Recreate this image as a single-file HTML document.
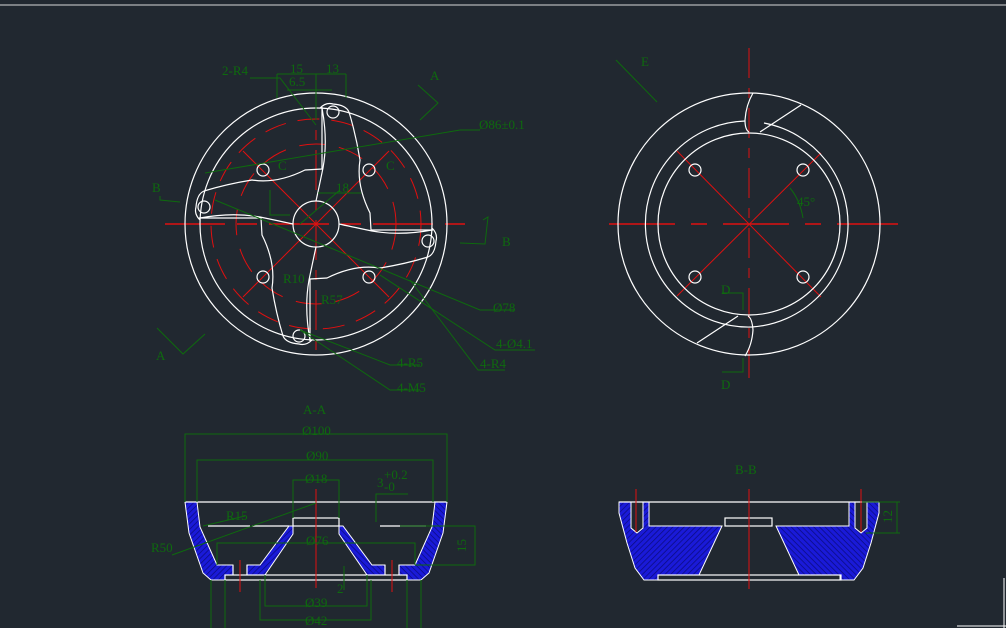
<!DOCTYPE html>
<html><head><meta charset="utf-8"><style>
html,body{margin:0;padding:0;background:#212830;}
svg{display:block}
text{font-family:"Liberation Serif",serif;fill:#0e6a0e;font-size:13px}
</style></head><body>
<svg width="1006" height="628" viewBox="0 0 1006 628" xmlns="http://www.w3.org/2000/svg">
<defs>
<pattern id="h" width="4" height="4" patternUnits="userSpaceOnUse" patternTransform="rotate(45)">
<rect width="4" height="4" fill="#1a1ad8"/><line x1="0" y1="0" x2="0" y2="4" stroke="#0b0b80" stroke-width="1.5"/>
</pattern>
</defs>
<line x1="0" y1="5" x2="1006" y2="5" stroke="#d8d8d8" stroke-width="1"/>

<!-- LEFT VIEW -->
<g fill="none">
<g stroke="#e01010" stroke-width="1">
<line x1="165" y1="224" x2="465" y2="224" stroke-width="1.5" stroke-dasharray="60,12,20,12"/>
<line x1="316" y1="80" x2="316" y2="355" stroke-dasharray="40,10,10,10"/>
<circle cx="316" cy="224" r="105" stroke-dasharray="22,12"/>
<circle cx="316" cy="224" r="80" stroke-dasharray="26,14"/>
<line x1="243" y1="151" x2="389" y2="297"/>
<line x1="389" y1="151" x2="243" y2="297"/>
</g>
<g stroke="#fff" stroke-width="1.2">
<circle cx="316" cy="224" r="131"/>
<circle cx="316" cy="224" r="116"/>
<circle cx="316" cy="224" r="23"/>
<circle cx="263" cy="170" r="6"/><circle cx="369" cy="170" r="6"/>
<circle cx="263" cy="277" r="6"/><circle cx="369" cy="277" r="6"/>
<g id="arm">
<path d="M322,108 Q328,140 323,168 Q318,192 316,201"/>
<path d="M349,112 Q356,135 360,160 Q356,185 370,213 L371,230 L433,230"/>
<path d="M320,108 Q326,102 333,104 Q346,105 349,112"/>
<circle cx="333" cy="112" r="6"/>
</g>
<use href="#arm" transform="rotate(90 316 224)"/>
<use href="#arm" transform="rotate(180 316 224)"/>
<use href="#arm" transform="rotate(270 316 224)"/>
</g>
<g stroke="#0e6a0e" stroke-width="1">
<path d="M277,98 L277,74 M346,98 L346,74 M277,74 L346,74 M316,74 L316,120 M287,90 L332,90"/>
<path d="M250,78 L280,78 L316,125"/>
<path d="M420,120 L438,103 L418,85"/>
<path d="M205,173 L460,130 L480,130"/>
<path d="M160,196 L160,200 L180,202"/>
<path d="M483,220 L488,217 L485,244 L460,243"/>
<path d="M300,224 L340,190 M318,193 L361,193"/>
<path d="M215,200 L480,310 L515,310"/>
<path d="M380,275 L495,350 L535,350"/>
<path d="M410,280 L478,370 L505,370"/>
<path d="M300,330 L390,365 L420,365"/>
<path d="M300,330 L390,390 L420,390"/>
<path d="M157,328 L183,354 L205,334"/>
<path d="M270,190 L270,215 L290,215"/>
</g>
</g>
<text x="222" y="75">2-R4</text>
<text x="290" y="73">15</text><text x="326" y="73">13</text>
<text x="289" y="86">6.5</text>
<text x="430" y="80" font-size="15">A</text>
<text x="479" y="129">Ø86±0.1</text>
<text x="152" y="192" font-size="14">B</text>
<text x="278" y="170" font-size="14">C</text>
<text x="386" y="170" font-size="14">C</text>
<text x="336" y="192">18</text>
<text x="283" y="283">R10</text>
<text x="321" y="304">R57</text>
<text x="502" y="246" font-size="14">B</text>
<text x="493" y="312">Ø78</text>
<text x="496" y="348">4-Ø4.1</text>
<text x="480" y="368">4-R4</text>
<text x="397" y="367">4-R5</text>
<text x="397" y="392">4-M5</text>
<text x="156" y="360" font-size="15">A</text>

<!-- RIGHT VIEW -->
<g fill="none">
<g stroke="#e01010" stroke-width="1">
<line x1="609" y1="224" x2="898" y2="224" stroke-width="1.5" stroke-dasharray="66,16,16,16"/>
<line x1="749" y1="48" x2="749" y2="388" stroke-dasharray="30,10,10,10"/>
<line x1="677" y1="151" x2="821" y2="297"/>
<line x1="821" y1="153" x2="677" y2="296"/>
</g>
<g stroke="#fff" stroke-width="1.2">
<circle cx="749" cy="224" r="131"/>
<path d="M745,121 A103,103 0 1 0 752,327"/>
<path d="M764,123 A103,103 0 0 1 752,327"/>
<circle cx="749" cy="224" r="91"/>
<circle cx="695" cy="170" r="6"/><circle cx="803" cy="170" r="6"/>
<circle cx="695" cy="277" r="6"/><circle cx="803" cy="277" r="6"/>
<path d="M753,93 Q746,105 745,120 Q745,130 749,132 M760,132 L801,105"/>
<path d="M745,356 Q752,345 753,330 Q752,318 748,316 M738,316 L697,343"/>
</g>
<g stroke="#0e6a0e" stroke-width="1">
<path d="M616,60 L657,102"/>
<path d="M790,188 Q800,200 803,218"/>
<path d="M722,293 L743,293 L743,310"/>
<path d="M722,372 L743,372 L743,358"/>
</g>
</g>
<text x="641" y="66" font-size="15">E</text>
<text x="797" y="206">45°</text>
<text x="721" y="294" font-size="15">D</text>
<text x="721" y="389" font-size="15">D</text>

<!-- SECTION A-A -->
<g>
<g id="aal">
<path d="M185,502 L197,502 L200,527 L217,565 L233,565 L233,575 L225,575 L225,580 L211,580 L203,573 L189,533 Z" fill="url(#h)" stroke="#fff" stroke-width="1"/>
<path d="M247,565 L260,565 L289,526 L293,526 L293,534 L265,575 L247,575 Z" fill="url(#h)" stroke="#fff" stroke-width="1"/>
</g>
<use href="#aal" transform="translate(632 0) scale(-1 1)"/>
<g fill="none" stroke="#fff" stroke-width="1.2">
<line x1="185" y1="502" x2="447" y2="502"/>
<rect x="293" y="518" width="46" height="8"/>
<line x1="208" y1="526" x2="250" y2="526"/><line x1="252" y1="526" x2="289" y2="526"/>
<line x1="380" y1="526" x2="426" y2="526"/>
<rect x="225" y="575" width="182" height="5"/>
<line x1="233" y1="565" x2="233" y2="575"/><line x1="247" y1="565" x2="247" y2="575"/>
<line x1="385" y1="565" x2="385" y2="575"/><line x1="399" y1="565" x2="399" y2="575"/>
</g>
<g stroke="#e01010" stroke-width="1"><line x1="316" y1="489" x2="316" y2="588"/><line x1="240" y1="560" x2="240" y2="592"/><line x1="392" y1="560" x2="392" y2="592"/></g>
<g fill="none" stroke="#0e6a0e" stroke-width="1">
<path d="M185,502 L185,434 L447,434 L447,502"/>
<path d="M197,502 L197,460 L433,460 L433,502"/>
<path d="M293,518 L293,480 L339,480 L339,518"/>
<path d="M376,522 L376,494 L408,494"/>
<path d="M217,565 L217,543 L415,543 L415,565"/>
<path d="M400,526 L475,526 L475,565 L415,565"/>
<path d="M172,555 L316,503"/>
<path d="M203,526 L245,516"/>
<path d="M265,575 L265,606 L367,606 L367,575"/>
<path d="M260,580 L260,620 L371,620 L371,580"/>
<path d="M211,580 L211,628 M225,580 L225,628 M407,580 L407,628 M421,580 L421,628"/>
<path d="M344,566 L344,590"/>
</g>
</g>
<text x="303" y="414" font-size="14">A-A</text>
<text x="302" y="435">Ø100</text>
<text x="306" y="460">Ø90</text>
<text x="305" y="483">Ø18</text>
<text x="377" y="487">3</text><text x="384" y="479" font-size="11">+0.2</text><text x="384" y="491" font-size="11">-0</text>
<text x="226" y="520">R15</text>
<text x="151" y="552">R50</text>
<text x="306" y="545">Ø76</text>
<text x="466" y="552" transform="rotate(-90 466 552)">15</text>
<text x="337" y="593">2</text>
<text x="305" y="607">Ø39</text>
<text x="305" y="625">Ø42</text>

<!-- SECTION B-B -->
<g>
<g id="bbl">
<path d="M619,502 L631,502 L631,528 L637,533 L643,528 L643,502 L649,502 L649,526 L722,526 L699,575 L658,575 L658,580 L644,580 L635,568 L627,543 L619,513 Z" fill="url(#h)" stroke="#fff" stroke-width="1"/>
</g>
<use href="#bbl" transform="translate(1498 0) scale(-1 1)"/>
<g fill="none" stroke="#fff" stroke-width="1.2">
<line x1="619" y1="502" x2="879" y2="502"/>
<rect x="725" y="518" width="47" height="8"/>
<rect x="658" y="575" width="183" height="5"/>
</g>
<g stroke="#e01010" stroke-width="1"><line x1="749" y1="489" x2="749" y2="589"/><line x1="636" y1="489" x2="636" y2="532"/><line x1="861" y1="489" x2="861" y2="532"/></g>
<g fill="none" stroke="#0e6a0e" stroke-width="1"><path d="M862,502 L900,502 M866,533 L900,533 M897,502 L897,533"/></g>
</g>
<text x="735" y="474" font-size="14">B-B</text>
<text x="892" y="523" transform="rotate(-90 892 523)">12</text>
<g stroke="#fff" stroke-width="1"><line x1="957" y1="626" x2="1006" y2="626"/><line x1="1004" y1="578" x2="1004" y2="628"/></g>
</svg>
</body></html>
